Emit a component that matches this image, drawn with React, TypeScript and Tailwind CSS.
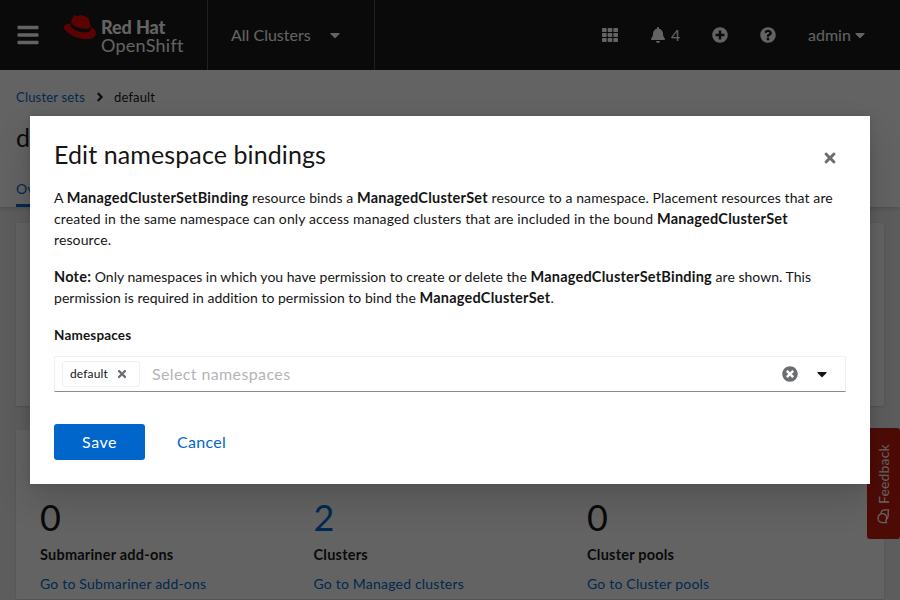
import type { ReactNode } from "react";
import {
  FaAngleRight,
  FaBars,
  FaBell,
  FaCaretDown,
  FaPlusCircle,
  FaQuestionCircle,
  FaTh,
  FaTimes,
  FaTimesCircle,
} from "react-icons/fa";
import { SiRedhat } from "react-icons/si";

function Masthead() {
  return (
    <header className="flex h-[70px] items-center bg-[#151515] text-base text-white">
      <div className="flex h-full w-[208px] shrink-0 items-center border-r border-[#4f5255] pl-4">
        <FaBars className="size-6" />
        <div className="ml-6 flex h-full pt-[11px]">
          <SiRedhat className="size-8 text-[#ee0000]" />
          <div className="ml-[5px] pt-[7px] text-[18px] leading-[18px]">
            <div className="font-black tracking-[-0.1px]">Red Hat</div>
            <div className="tracking-[0.25px]">OpenShift</div>
          </div>
        </div>
      </div>
      <div className="flex h-full w-[167px] shrink-0 items-center border-r border-[#4f5255] pl-[23px]">
        <span className="w-[96px]">All Clusters</span>
        <FaCaretDown className="size-4" />
      </div>
      <div className="ml-auto flex items-center pr-8">
        <FaTh className="size-4" />
        <FaBell className="ml-8 size-4" />
        <span className="ml-[5px] w-[41px]">4</span>
        <FaPlusCircle className="size-4" />
        <FaQuestionCircle className="ml-8 size-4" />
        <span className="ml-8 w-[44px]">admin</span>
        <FaCaretDown className="size-4" />
      </div>
    </header>
  );
}

function Stat({ value, label, link, linked }: { value: string; label: string; link: string; linked?: boolean }) {
  return (
    <div className="w-[273.5px]">
      <div className={linked ? "text-[36px] leading-[44px] text-[#0066cc]" : "text-[36px] leading-[44px]"}>
        {value}
      </div>
      <div className="mt-[5px] text-[14.5px] leading-[21px] font-bold tracking-[0.22px]">{label}</div>
      <div className="mt-2 text-sm leading-[21px] tracking-[0.2px] text-[#0066cc]">{link}</div>
    </div>
  );
}

function ClusterSetPage() {
  return (
    <main className="flex h-[530px] flex-col overflow-hidden bg-[#f0f0f0]">
      <section className="h-[137px] shrink-0 bg-white px-4 pt-4 shadow-[0_2px_4px_rgba(3,3,3,0.16)]">
        <nav className="flex h-[22px] items-center text-[13px]">
          <span className="w-[77px] pt-px tracking-[0.2px] text-[#0066cc]">Cluster sets</span>
          <FaAngleRight className="size-[14px]" />
          <span className="ml-[7px] pt-px tracking-[0.15px]">default</span>
        </nav>
        <h1 className="mt-[13px] text-[25px] leading-[32px]">default</h1>
        <div className="mt-[19px] flex">
          <div className="h-[35px] border-b-3 border-[#0066cc] pt-[6px] text-sm leading-[21px] text-[#0066cc]">Overview</div>
        </div>
      </section>
      <section className="mx-4 mt-4 h-[183px] shrink-0 bg-white shadow-[0_1px_2px_rgba(3,3,3,0.12),0_0_2px_rgba(3,3,3,0.06)]" />
      <section className="mx-4 mt-6 flex h-[169px] shrink-0 bg-white pt-[65px] pl-6 shadow-[0_1px_2px_rgba(3,3,3,0.12),0_0_2px_rgba(3,3,3,0.06)]">
        <Stat value="0" label="Submariner add-ons" link="Go to Submariner add-ons" />
        <Stat value="2" label="Clusters" link="Go to Managed clusters" linked />
        <Stat value="0" label="Cluster pools" link="Go to Cluster pools" />
      </section>
    </main>
  );
}

function FeedbackTab() {
  return (
    <div className="absolute top-[428px] right-0 flex h-[111px] w-[33px] flex-col items-center rounded-[3px] bg-[#c9190b] pt-[15px] text-white">
      <span className="h-[61px] rotate-180 text-sm leading-[33px] tracking-[0.15px] [writing-mode:vertical-rl]">Feedback</span>
      <svg viewBox="0 0 14 16" className="mt-[4px] mr-[2px] h-4 w-[14px]" fill="none" stroke="currentColor" strokeWidth="1.3" strokeLinejoin="round">
        <path d="M6.300 5.700C3.700 5.700 2 7.600 2 10.100c0 2.500 1.700 4.500 4.300 4.500h4.300L9.700 12.900c.6-.7.900-1.700.9-2.800 0-2.500-1.700-4.400-4.300-4.400z" />
        <path d="M4.900 5.900C5 3.500 6.800 1.900 9 1.900h3.700l-.6 2.200c.6 2.700-.1 5.400-1.600 7.200" />
      </svg>
    </div>
  );
}

function Strong({ children }: { children: ReactNode }) {
  return <strong className="text-[14.5px] font-bold tracking-[0.23px]">{children}</strong>;
}

function BindingsDialog() {
  return (
    <div className="absolute top-[116px] left-[30px] h-[368px] w-[840px] bg-white px-6 pt-[23px] shadow-[0_16px_32px_rgba(3,3,3,0.16),0_0_8px_rgba(3,3,3,0.1)]">
      <div className="flex h-8 items-center justify-between pr-2">
        <h2 className="pb-px text-[25px] leading-[31px] tracking-[0.1px]">Edit namespace bindings</h2>
        <FaTimes className="mt-[5px] size-4 text-[#6a6e73]" />
      </div>
      <div className="mt-4 text-sm leading-[21px] whitespace-nowrap">
        <p className="h-[21px] tracking-[0.09px]">
          A <Strong>ManagedClusterSetBinding</Strong> resource binds a <Strong>ManagedClusterSet</Strong> resource to a namespace. Placement resources that are
        </p>
        <p className="h-[21px] tracking-[0.12px]">
          created in the same namespace can only access managed clusters that are included in the bound <Strong>ManagedClusterSet</Strong>
        </p>
        <p className="h-[21px] tracking-[0.12px]">resource.</p>
        <p className="mt-4 h-[21px] tracking-[0.02px]">
          <Strong>Note:</Strong> Only namespaces in which you have permission to create or delete the <Strong>ManagedClusterSetBinding</Strong> are shown. This
        </p>
        <p className="h-[21px] tracking-[0.03px]">
          permission is required in addition to permission to bind the <Strong>ManagedClusterSet</Strong>.
        </p>
      </div>
      <div className="mt-[17px] text-[13.5px] leading-[21px] font-bold tracking-[0.18px]">Namespaces</div>
      <div className="mt-[10px] flex h-9 items-center border border-[#f0f0f0] border-b-[#8a8d90] pr-[15px] pl-[7px]">
        <div className="flex h-[26px] w-[78px] items-center rounded-[3px] border border-[#f0f0f0] pl-[7px] text-xs tracking-[0.15px]">
          <span className="w-[46px]">default</span>
          <FaTimes className="size-3 text-[#6a6e73]" />
        </div>
        <span className="ml-3 text-base tracking-[0.38px] text-[#b4b5b6]">Select namespaces</span>
        <FaTimesCircle className="ml-auto size-4 text-[#6a6e73]" />
        <FaCaretDown className="ml-4 size-4" />
      </div>
      <div className="mt-8 flex items-center text-base leading-9">
        <button className="h-9 w-[91px] rounded-[3px] bg-[#0066cc] tracking-[0.5px] text-white">Save</button>
        <button className="ml-8 tracking-[0.3px] text-[#0066cc]">Cancel</button>
      </div>
    </div>
  );
}

export default function App() {
  return (
    <div className="relative h-[600px] w-[900px] overflow-hidden font-['Lato',sans-serif] text-[#151515]">
      <Masthead />
      <ClusterSetPage />
      <FeedbackTab />
      <div className="absolute inset-0 bg-[#030303]/62" />
      <BindingsDialog />
    </div>
  );
}
